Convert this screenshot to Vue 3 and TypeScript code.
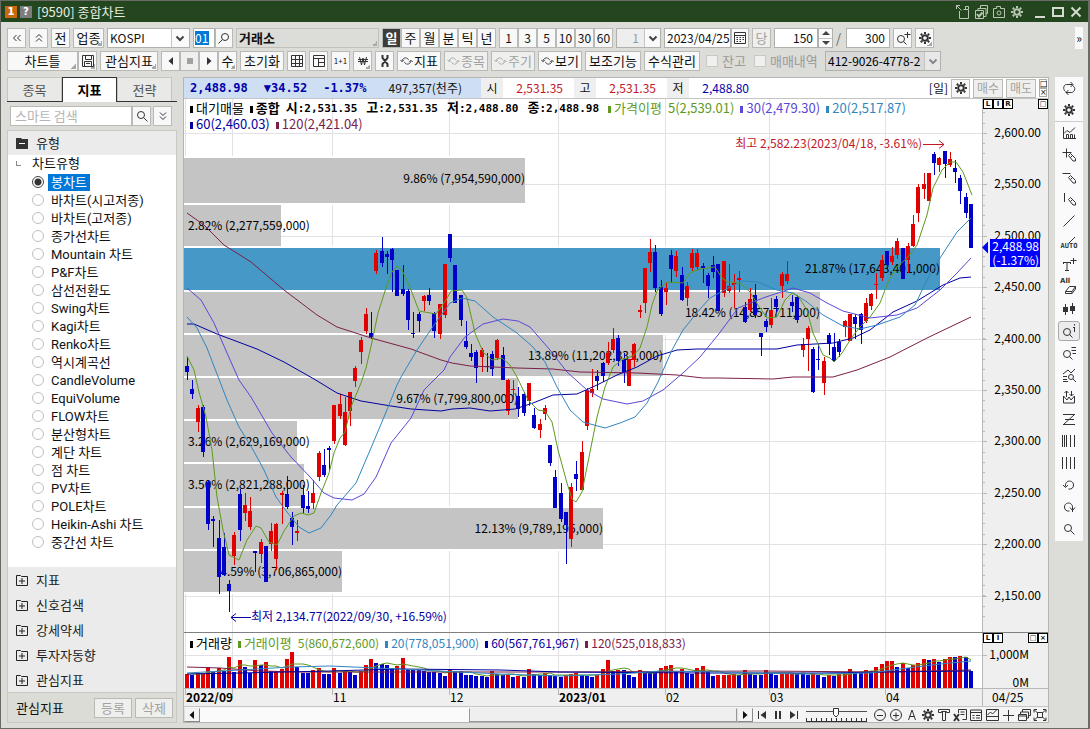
<script setup lang="ts">
import { computed, h, ref } from 'vue'

interface Stroke { d: string; w?: number; fill?: boolean }

const gear: Stroke[] = [
  { d: 'M8 5.2a2.8 2.8 0 1 0 0 5.6a2.8 2.8 0 1 0 0-5.6', w: 2 },
  { d: 'M8 2v2M8 12v2M2 8h2M12 8h2M3.8 3.8l1.4 1.4M10.8 10.8l1.4 1.4M12.2 3.8l-1.4 1.4M5.2 10.8l-1.4 1.4', w: 2 },
]
const lens = 'M7 3.5a3.5 3.5 0 1 0 0 7a3.5 3.5 0 1 0 0-7M9.5 9.5l4 4'
const smallLens = 'M6 5.5a3.5 3.5 0 1 0 0 7a3.5 3.5 0 1 0 0-7M8.5 11.5l3 3'
const pencil = 'M7.5 8.5l2-2l5 5v2.500h-2.500zM9.500 10.500l2-2'

const icons: Record<string, Stroke[]> = {
  gear,
  search: [{ d: lens }],
  searchLeft: [{ d: 'M9 3.5a3.5 3.5 0 1 0 0 7a3.5 3.5 0 1 0 0-7M6.5 9.5l-4 4' }],
  zoomPlus: [{ d: smallLens }, { d: 'M12.5 2v6M9.5 4.5h6' }],
  chevronsLeft: [{ d: 'M7.5 5l-3 3l3 3M11.5 5l-3 3l3 3' }],
  chevronsUp: [{ d: 'M5 7.5l3-3l3 3M5 11.5l3-3l3 3' }],
  chevronsDown: [{ d: 'M5 4.5l3 3l3-3M5 8.5l3 3l3-3' }],
  chevronDown: [{ d: 'M4.5 6.5l3.5 3.5l3.5-3.5', w: 2 }],
  calendar: [{ d: 'M2.5 2.5h11v11h-11zM2.5 5.5h11M4.5 7.5h1.5M7.5 7.5h1.5M10.5 7.5h1.5M4.5 9.5h1.5M7.5 9.5h1.5M10.5 9.5h1.5M4.5 11.5h1.5M7.5 11.5h1.5' }],
  save: [{ d: 'M2.5 2.5h11v11h-11zM5.5 2.5v4h6v-4M4.5 13.5v-5h7v5M6 10.5h4' }],
  left: [{ d: 'M10 4v8L5.5 8z', fill: true }],
  right: [{ d: 'M6 4v8L10.5 8z', fill: true }],
  stop: [{ d: 'M5 5h6v6H5z', fill: true }],
  grid: [{ d: 'M2.5 2.5h11v11h-11zM2.5 6.5h11M2.5 10.5h11M6.5 2.5v11M10.5 2.5v11' }],
  panes: [{ d: 'M2.5 2.5h11v11h-11zM2.5 5.5h11M7.5 5.5v8M7.5 9.5h6' }],
  won: [{ d: 'M4.5 4l2 8l1.5-7l1.5 7l2-8M3 6.5h10M3 8.5h10' }],
  dna: [{ d: 'M5.5 2v3l5 6v3M10.5 2v3l-5 6v3', w: 2 }],
  cycle: [{ d: 'M2.5 8.5c0-5 7-6 8-1.500M0.5 6.5l2 2.500l2.500-2.500M13.5 7.5c0 5-7 6-8 1.500M11 9.500l2.500-2.500l2.500 2.500' }],
  sync: [{ d: 'M4.5 11.5c-3-2-2-7 1-7h6M9.5 2l2.500 2.500L9.5 7M11.5 5.5c4 2 2 7-1 7H5M7.5 10l-2.500 2.500L7.5 15' }],
  chart: [{ d: 'M2.5 2v11.5H15M3 8.5l3-3l3 2l5-5M5.5 13v-3.500h2V13M9.5 13V9.5h2V13M13.5 9.500V13' }],
  crossPen: [{ d: 'M1.5 5.5h9M5.5 1.5v9' }, { d: pencil }],
  minusPen: [{ d: 'M1.5 4.5h8' }, { d: pencil }],
  barPen: [{ d: 'M3.5 2v9' }, { d: pencil }],
  line: [{ d: 'M2.5 13.5l11-11' }],
  tPlus: [{ d: 'M2 5.5h8M6 5.5v8M4 13.5h4M2.5 5v2M9.5 5v2M12.5 1v6M9.5 3.5h6' }],
  erase: [{ d: 'M4.5 12.5l4-5h6l-3.500 5zM4.5 12.5v2H11v-2M11 14.5l3.500-4.500V7.5' }],
  candles: [{ d: 'M4.5 3v11M11.5 2v11' }, { d: 'M2 6h5v5H2zM9 5h5v5H9z', fill: true }],
  lensI: [{ d: smallLens }, { d: 'M13.5 1v1.500M13.5 4v5M12 4.5h1.500' }],
  lensList: [{ d: smallLens }, { d: 'M10.5 2.5h4.500M10.5 5.5h4.500M11.5 8.5h3.500' }],
  chartLens: [{ d: 'M2 7l5-4l3 3l4-4M2 9.5h4M2 12.5h4M2 14.5h5M10 7.5a2.5 2.5 0 1 0 0 5a2.5 2.5 0 1 0 0-5M12 12l3 3' }],
  swing: [{ d: 'M2.5 14v-7l3.500 4l2-3l2 3l3.500-4v7zM5.5 8V2M3.5 4l2-2l2 2M10.5 2v5M8.5 5l2 2l2-2' }],
  zigzag: [{ d: 'M2 3.5h12M4 8.5h9M2 13.5h12M13.5 3.5l-11 10' }],
  bars5: [{ d: 'M1.5 2v12M3.5 2v12M5.5 2v12M9.5 2v12M13.5 2v12' }],
  bars4: [{ d: 'M1.5 2v12M5.5 2v12M9.5 2v12M13.5 2v12' }],
  undo: [{ d: 'M4.5 9.5c-1-7 8-7 8-1.500c0 3-2 4.500-5 4M2 8l2.500 2.500l2.500-2.500' }],
  redo: [{ d: 'M11.5 9.5c1-7-8-7-8-1.500c0 3 2 4.500 5 4M14 8.500l-2.500 3l-2.500-3M11.500 8v5' }],
  export: [{ d: 'M4.5 7v7.500h9v-9h-5M10.5 5V2.5h3V5M1.5 1.5l5 5M1.5 5v-3.500H5' }],
  copies: [{ d: 'M2.5 6.5h8v8h-8zM5 6V4.5h8v8h-2M7.5 4V1.5h7v8h-1.500' }, { d: 'M4 10l2 2.500l3.500-4', w: 2 }],
  camera: [{ d: 'M2.5 4.5h3v-2h4v2h4v9h-11zM8 7a2 2 0 1 0 0 4a2 2 0 1 0 0-4' }],
  minimize: [{ d: 'M3 13h10', w: 2 }],
  maximize: [{ d: 'M3 4h10v8H3z', w: 2 }],
  close: [{ d: 'M3.5 3.5l9 9M12.5 3.5l-9 9', w: 2 }],
  toStart: [{ d: 'M4.5 4v8' }, { d: 'M12 4v8L6.5 8z', fill: true }],
  pause: [{ d: 'M6 4v8M10 4v8', w: 2 }],
  toEnd: [{ d: 'M11.5 4v8' }, { d: 'M4 4v8L9.5 8z', fill: true }],
  zoomOut: [{ d: 'M8 2.5a5.5 5.5 0 1 0 0 11a5.5 5.5 0 1 0 0-11M5 8.5h6' }],
  zoomIn: [{ d: 'M8 2.5a5.5 5.5 0 1 0 0 11a5.5 5.5 0 1 0 0-11M5 8.5h6M8 5.5v6' }],
  letterA: [{ d: 'M4.5 13l3.500-10l3.500 10M5.5 9.5h5' }],
  hammer: [{ d: 'M2.5 5.5v-3h11v3h-3v-1h-5v1zM6.5 5v8.500h3V5' }],
  excel: [{ d: 'M6.5 6V2.5h8v10h-4M8.5 5h4M8.5 7.5h4' }, { d: 'M2 7l5 7M7 7l-5 7', w: 2 }],
  table: [{ d: 'M2.5 3h11v10.500h-11zM2.5 5.5h11M4.5 8.5h2M8 8.5h4M4.5 11h2M8 11h4' }],
  report: [{ d: 'M2.5 2.5h12v11h-12zM2.5 9.5h12M3.5 8l3-3l2 2l4-4' }],
  plus: [{ d: 'M8.5 3v11M3 8.5h11' }],
  windows: [{ d: 'M2.5 7.5h8v6h-8zM4.5 7V5h8v6h-2M6.5 5V2.5h8v6h-2M2.5 9h8' }],
  fit: [{ d: 'M2 5.5V2.5h3M11 2.5h3v3M14 10.5v3h-3M5 13.5H2v-3M5.5 5.5h5v5h-5zM2.5 3l3 3M13.5 3l-3 3M2.5 13l3-3M13.5 13l-3-3' }],
  folderPlus: [{ d: 'M2.5 3.5h4l1 1h6v9h-11zM5 9h6M8 6v6' }],
  folderMinus: [{ d: 'M2 3h5l1 1h6v10H2z', fill: true }],
}

const Icon = (props: { name: string }) =>
  h('svg', { viewBox: '0 0 16 16', width: 16, height: 16, fill: 'none', 'aria-hidden': 'true' },
    (icons[props.name] ?? []).map((s) =>
      h('path', {
        d: s.d,
        stroke: s.fill ? 'none' : 'currentColor',
        'stroke-width': s.w ?? 1,
        fill: s.fill ? 'currentColor' : 'none',
      })))
Icon.props = ['name']

const titleIcons = ['export', 'copies', 'camera', 'gear']
const windowIcons = ['minimize', 'maximize', 'close']
const periods = ['일', '주', '월', '분', '틱', '년']
const minutes = [1, 3, 5, 10, 30, 60]
const cycles = [
  { label: '지표', off: false },
  { label: '종목', off: true },
  { label: '주기', off: true },
  { label: '보기', off: false },
]
const chartTypes = ['봉차트', '바차트(시고저종)', '바차트(고저종)', '종가선차트', 'Mountain 차트', 'P&F차트', '삼선전환도',
  'Swing차트', 'Kagi차트', 'Renko차트', '역시계곡선', 'CandleVolume', 'EquiVolume', 'FLOW차트', '분산형차트', '계단 차트',
  '점 차트', 'PV차트', 'POLE차트', 'Heikin-Ashi 차트', '중간선 차트']
const selected = ref('봉차트')
const folders = ['지표', '신호검색', '강세약세', '투자자동향', '관심지표']
const tools = ['chart', 'crossPen', 'minusPen', 'barPen', 'line', 'auto', 'tPlus', 'erase', 'candles', 'lensI', 'lensList',
  'chartLens', 'swing', 'zigzag', 'bars5', 'bars4', 'undo', 'redo', 'search']
const footIcons = ['zoomOut', 'zoomIn', 'letterA', 'gear', 'hammer', 'excel', 'table', 'report', 'plus', 'windows', 'fit']

/* Candle: direction, body top, body bottom, wick top, wick bottom */
type Candle = [string, number, number, number, number]
const candleText = `b366 372 357 380,b389 394 380 399,r408 422 405 432,b407 452 405 457,b482 524 480 530,b519 521 516 547,b538 577 520 594,b547 575 533 576,b584 591 580 612,r535 556 532 565,
b494 530 489 541,r505 513 493 521,r511 527 497 530,b551 553 551 572,r542 554 539 563,b546 582 546 582,r531 544 523 551,r524 559 523 570,r493 495 491 524,b494 507 476 509,
b518 527 512 545,r531 533 520 541,b495 508 485 513,b506 509 491 513,r493 503 480 509,r453 477 451 481,b465 475 449 477,b448 450 446 470,r405 441 405 444,r404 416 394 419,
r412 445 397 446,r392 411 392 426,r368 381 366 387,r340 352 337 364,r314 331 308 334,b333 337 312 339,r253 271 250 274,b251 263 237 267,b254 257 251 274,b249 260 248 292,
b270 296 270 296,b289 294 265 296,b291 320 289 330,b333 334 312 338,b314 321 312 332,r296 301 295 311,b295 301 288 305,b313 331 312 338,r304 334 304 339,r264 315 264 318,
b234 258 234 262,b265 303 265 303,b295 320 295 326,b341 347 321 349,b353 357 344 361,b352 368 350 383,r350 357 348 372,b366 367 353 372,b354 369 351 376,r340 358 339 360,
b355 380 347 380,r380 411 379 415,r389 390 380 400,b396 409 387 417,b394 413 392 416,r383 401 383 406,b415 428 408 429,r424 430 419 438,r408 414 405 420,b445 463 445 466,
b477 508 470 508,b493 519 483 522,b512 525 512 564,r487 539 483 547,b474 479 461 491,r452 490 441 490,r390 426 388 430,r389 393 369 397,b376 381 370 390,b363 376 362 382,
r353 363 342 365,r339 350 328 353,b338 361 335 366,b360 372 353 383,r359 386 359 386,r344 360 343 367,r310 312 305 318,r268 303 268 313,r252 263 239 272,b252 288 245 292,
b287 314 280 316,r288 292 283 305,b255 269 250 283,r256 271 251 277,b275 300 267 301,r286 298 282 306,r253 268 249 271,r253 267 249 270,b266 268 263 283,b275 286 273 298,
b265 272 256 278,b264 311 264 311,r261 293 261 297,r286 291 264 293,r283 285 274 308,r278 280 271 292,b307 322 302 323,r299 310 288 312,b295 315 284 318,b333 337 333 356,
b321 327 319 332,r310 325 298 328,b299 307 296 312,r274 286 272 298,r274 281 261 284,b302 306 295 312,b297 320 295 323,r344 350 338 357,r328 339 326 371,b349 392 347 393,
b359 360 344 370,r361 383 357 395,b335 344 333 355,b347 361 333 362,b342 352 339 357,r321 327 320 337,r314 341 314 341,b317 324 314 339,b314 330 313 344,r303 321 298 323,
r294 306 293 310,r284 285 273 299,r260 278 255 281,b251 265 251 270,r256 262 247 265,r241 255 238 259,b248 279 248 279,r246 260 243 273,r224 246 215 247,r187 213 184 222,
r184 189 173 199,r173 201 173 201,b154 163 152 175,r158 165 157 172,b151 164 151 178,r159 165 152 167,b168 172 160 183,b178 191 175 204,b197 213 193 218,b204 248 204 248`
const candles: Candle[] = candleText.split(',').map((t) => {
  const s = t.trim()
  const n = s.slice(1).split(' ').map(Number)
  return [s[0], n[0], n[1], n[2], n[3]]
})
const xAt = (i: number) => Math.round(187 + (i * 784) / 149)

const averages = [
  { color: '#7a2048', points: '187,213 204,225 224,245 251,262 284,290 317,315 337,327 371,338 411,349 441,360 452,363 470,366 517,368 553,369 580,372 637,373 677,375 703,378 718,378 773,379 793,377 833,377 857,370 890,357 927,338 950,327 971,317' },
  { color: '#0000a0', points: '187,324 194,324 217,334 257,349 284,362 314,379 337,393 361,401 391,406 411,409 441,411 452,409 470,408 490,411 515,409 533,403 553,395 577,394 597,385 617,375 637,367 657,356 677,350 697,349 733,349 777,349 797,345 833,343 853,338 870,330 893,312 917,301 943,285 960,278 971,277' },
  { color: '#5a48d8', points: '187,288 201,300 214,323 227,353 239,380 251,397 272,433 291,457 311,478 324,493 334,498 352,500 364,494 376,477 391,443 411,418 424,390 444,370 450,357 465,337 483,324 503,319 518,321 530,327 550,350 567,372 587,390 603,399 627,404 643,401 663,390 683,373 700,357 718,335 727,323 738,308 763,298 793,288 810,293 827,303 843,311 870,318 897,315 917,308 940,290 957,273 971,258' },
  { color: '#2f86c0', points: '187,317 197,328 207,348 217,374 227,400 239,427 252,448 264,470 276,497 287,512 299,527 309,533 321,528 331,515 337,505 356,483 371,448 384,417 397,385 401,377 417,350 434,325 450,303 462,298 475,301 493,317 517,333 533,347 545,362 557,387 570,410 583,422 605,428 620,423 635,417 647,403 658,382 672,350 683,330 700,309 710,298 730,287 743,281 758,282 777,290 793,293 807,302 823,315 843,326 860,329 877,325 900,317 915,305 927,280 940,258 957,232 971,218' },
  { color: '#5e9a1e', points: '187,356 194,370 199,392 206,417 212,450 217,497 223,530 229,555 239,560 247,540 256,526 261,528 269,542 277,545 284,531 294,516 301,513 308,515 314,513 321,493 329,473 334,453 340,438 345,432 351,407 361,383 366,368 372,342 378,313 386,288 392,272 397,266 402,270 411,290 419,311 436,314 446,300 451,291 462,290 467,298 475,333 483,352 492,360 502,358 510,365 517,377 528,400 538,410 545,411 552,422 558,450 567,483 572,499 576,502 582,492 587,467 597,417 605,387 613,367 623,359 633,356 640,348 647,327 652,305 657,291 667,282 683,283 690,273 700,269 715,267 722,278 728,282 740,283 750,292 758,305 767,318 777,317 785,300 792,293 798,296 807,310 813,333 823,355 830,358 834,362 842,353 852,337 860,327 870,317 880,303 888,282 897,267 907,258 917,245 927,215 933,188 942,170 950,162 956,162 963,172 972,195' },
]

const profile = [
  { y: 158, h: 45, end: 525, text: '9.86% (7,954,590,000)' },
  { y: 205, h: 41, end: 281, text: '2.82% (2,277,559,000)' },
  { y: 248, h: 42, end: 940, text: '21.87% (17,643,401,000)' },
  { y: 292, h: 41, end: 820, text: '18.42% (14,857,711,000)' },
  { y: 335, h: 41, end: 663, text: '13.89% (11,202,331,000)' },
  { y: 378, h: 41, end: 518, text: '9.67% (7,799,800,000)' },
  { y: 421, h: 41, end: 297, text: '3.26% (2,629,169,000)' },
  { y: 464, h: 42, end: 304, text: '3.50% (2,821,288,000)' },
  { y: 508, h: 41, end: 603, text: '12.13% (9,789,195,000)' },
  { y: 551, h: 41, end: 342, text: '4.59% (3,706,865,000)' },
]

const priceLabels = ['2,600.00', '2,550.00', '2,500.00', '2,450.00', '2,400.00', '2,350.00', '2,300.00', '2,250.00', '2,200.00', '2,150.00']
const priceY = (i: number) => Math.round(133 + i * 51.4) + 0.5
const minorTicks = Array.from({ length: 51 }, (_, i) => Math.round(102 + i * 10.28) + 0.5)
const months = [
  { x: 185, label: '2022/09', bold: true },
  { x: 232, label: '', bold: false },
  { x: 332, label: '11', bold: false },
  { x: 449, label: '12', bold: false },
  { x: 558, label: '2023/01', bold: true },
  { x: 665, label: '02', bold: false },
  { x: 769, label: '03', bold: false },
  { x: 885, label: '04', bold: false },
]

/* Height of each volume bar, thirds of a unit */
const volumes = [42, 40, 44, 46, 62, 48, 61, 52, 93, 49, 84, 64, 46, 84, 69, 77, 52, 52, 56, 87, 108, 62, 46, 46, 54, 61, 43, 43, 61, 46,
  50, 49, 40, 52, 69, 87, 75, 72, 69, 61, 66, 90, 57, 54, 54, 52, 48, 48, 46, 37, 54, 52, 50, 40, 38, 36, 35, 33, 50, 42,
  38, 40, 34, 36, 34, 56, 42, 38, 44, 40, 36, 34, 38, 42, 44, 40, 36, 34, 40, 56, 84, 50, 54, 54, 38, 33, 54, 47, 46, 46,
  60, 66, 69, 52, 57, 45, 42, 60, 66, 52, 36, 38, 40, 40, 42, 38, 54, 42, 40, 38, 54, 46, 40, 42, 44, 46, 44, 42, 38, 44,
  40, 33, 38, 36, 42, 44, 57, 46, 44, 54, 50, 62, 71, 81, 81, 64, 74, 60, 70, 75, 87, 84, 87, 79, 87, 93, 93, 96, 92, 51]
const volumeBars = volumes.map((v, i) => ({
  x: xAt(i) - 2,
  h: Math.round(v / 3),
  color: v > (volumes[i - 1] ?? 0) || (v === volumes[i - 1] && candles[i][0] === 'r') ? '#e00000' : '#0000c8',
}))
const volumeFast = computed(() => volumes.map((_, i) => {
  const part = volumes.slice(Math.max(0, i - 4), i + 1)
  const mean = part.reduce((a, b) => a + b, 0) / part.length
  return `${xAt(i)},${Math.round(688 - mean / 3)}`
}).join(' '))
const volumeAverages = [
  { color: '#7a2048', points: '187,667 220,668 260,671 300,672 420,672 560,672 760,671 880,672 971,670' },
  { color: '#0000a0', points: '187,674 240,673 330,671 400,669 500,670 560,672 700,673 820,673 890,672 971,671' },
  { color: '#2f86c0', points: '187,673 240,670 290,667 330,666 400,669 440,671 500,674 560,676 620,674 660,671 720,672 800,674 870,673 900,669 940,664 971,661' },
]

const legendPrice = [
  { name: '가격이평', text: '5(2,539.01)', color: '#5e9a1e' },
  { name: '', text: '30(2,479.30)', color: '#5a48d8' },
  { name: '', text: '20(2,517.87)', color: '#2f86c0' },
]
const legendLow = [
  { name: '', text: '60(2,460.03)', color: '#0000a0' },
  { name: '', text: '120(2,421.04)', color: '#7a2048' },
]
const legendVolume = [
  { name: '거래량', text: '', color: '#000000' },
  { name: '거래이평', text: '5(860,672,600)', color: '#5e9a1e' },
  { name: '', text: '20(778,051,900)', color: '#2f86c0' },
  { name: '', text: '60(567,761,967)', color: '#0000a0' },
  { name: '', text: '120(525,018,833)', color: '#7a2048' },
]
const ohlc = [
  { name: '시', value: '2,531.35' },
  { name: '고', value: '2,531.35' },
  { name: '저', value: '2,488.80' },
  { name: '종', value: '2,488.98' },
]
const sliderTicks = Array.from({ length: 13 }, (_, i) => i)
</script>

<template>
  <div class="window">
    <header class="titlebar">
      <span class="badge one">1</span>
      <span class="badge help">?</span>
      <h1>[9590] 종합차트</h1>
      <div class="title-actions">
        <button v-for="n in titleIcons" :key="n" type="button" :aria-label="n"><Icon :name="n" /></button>
      </div>
      <div class="title-actions sys">
        <button v-for="n in windowIcons" :key="n" type="button" :aria-label="n"><Icon :name="n" /></button>
      </div>
    </header>

    <div class="toolbar">
      <button class="btn sq" type="button" aria-label="처음"><Icon name="chevronsLeft" /></button>
      <button class="btn sq" type="button" aria-label="위로"><Icon name="chevronsUp" /></button>
      <button class="btn sq" type="button">전</button>
      <button class="btn kind corner" type="button">업종</button>
      <div class="drop index">
        <select aria-label="지수"><option>KOSPI</option></select>
        <span class="arrow"><Icon name="chevronDown" /></span>
      </div>
      <div class="join">
        <div class="field code"><input type="text" value="01" aria-label="코드"></div>
        <button class="btn find" type="button" aria-label="찾기"><Icon name="searchLeft" /></button>
      </div>
      <input class="market corner" type="text" value="거래소" readonly aria-label="시장">
      <div class="join">
        <button v-for="p in periods" :key="p" class="btn sq" :class="{ on: p === '일' }" type="button">{{ p }}</button>
      </div>
      <div class="join">
        <button v-for="m in minutes" :key="m" class="btn sq num" type="button">{{ m }}</button>
      </div>
      <div class="drop tick">
        <select aria-label="틱 단위"><option>1</option></select>
        <span class="arrow"><Icon name="chevronDown" /></span>
      </div>
      <div class="join">
        <input class="date" type="text" value="2023/04/25" aria-label="날짜">
        <button class="btn find" type="button" aria-label="달력"><Icon name="calendar" /></button>
      </div>
      <button class="btn sq" type="button" disabled>당</button>
      <div class="join">
        <input class="count" type="text" value="150" aria-label="표시 개수">
        <span class="spin">
          <button type="button" aria-label="증가"><svg width="8" height="4" viewBox="0 0 8 4"><path d="M0 4L4 0l4 4z" fill="#444" /></svg></button>
          <button type="button" aria-label="감소"><svg width="8" height="4" viewBox="0 0 8 4"><path d="M0 0l4 4l4-4z" fill="#444" /></svg></button>
        </span>
      </div>
      <span class="slash">/</span>
      <input class="count" type="text" value="300" aria-label="전체 개수">
      <button class="btn sq" type="button" aria-label="확대"><Icon name="zoomPlus" /></button>
      <button class="btn sq corner" type="button" aria-label="설정"><Icon name="gear" /></button>
      <button class="more" type="button" aria-label="더보기">»</button>
    </div>

    <div class="toolbar second">
      <div class="join">
        <button class="btn frame corner" type="button">차트틀</button>
        <button class="btn sq corner" type="button" aria-label="저장"><Icon name="save" /></button>
      </div>
      <button class="btn favor corner" type="button">관심지표</button>
      <div class="join">
        <button class="btn sq" type="button" aria-label="이전"><Icon name="left" /></button>
        <button class="btn sq" type="button" aria-label="정지" disabled><Icon name="stop" /></button>
        <button class="btn sq" type="button" aria-label="다음"><Icon name="right" /></button>
        <button class="btn sq corner" type="button">수</button>
      </div>
      <button class="btn mid" type="button">초기화</button>
      <button class="btn sq" type="button" aria-label="격자"><Icon name="grid" /></button>
      <button class="btn sq" type="button" aria-label="화면 분할"><Icon name="panes" /></button>
      <button class="btn sq tiny" type="button">1+1</button>
      <button class="btn sq corner" type="button" aria-label="원화"><Icon name="won" /></button>
      <button class="btn sq" type="button" aria-label="패턴"><Icon name="dna" /></button>
      <button v-for="c in cycles" :key="c.label" class="btn mid cyc" type="button" :disabled="c.off">
        <Icon name="cycle" />{{ c.label }}
      </button>
      <button class="btn wide" type="button">보조기능</button>
      <button class="btn wide" type="button">수식관리</button>
      <div class="checks">
        <label><input type="checkbox" disabled>잔고</label>
        <label><input type="checkbox" disabled>매매내역</label>
      </div>
      <div class="drop account">
        <select aria-label="계좌"><option>412-9026-4778-2</option></select>
        <span class="arrow"><Icon name="chevronDown" /></span>
      </div>
    </div>

    <div class="body">
      <aside class="side">
        <nav class="tabs">
          <button type="button">종목</button>
          <button type="button" class="active">지표</button>
          <button type="button">전략</button>
        </nav>
        <div class="search">
          <input type="text" placeholder="스마트 검색" aria-label="스마트 검색">
          <button class="btn" type="button" aria-label="검색"><Icon name="search" /></button>
          <button class="btn fold" type="button" aria-label="펼치기"><Icon name="chevronsDown" /></button>
        </div>
        <div class="tree">
          <button class="folder first" type="button"><span class="minus"><Icon name="folderMinus" /></span>유형</button>
          <fieldset>
            <legend>차트유형</legend>
            <label v-for="t in chartTypes" :key="t">
              <input v-model="selected" type="radio" name="type" :value="t"><span>{{ t }}</span>
            </label>
          </fieldset>
          <button v-for="f in folders" :key="f" class="folder" type="button"><Icon name="folderPlus" />{{ f }}</button>
          <footer>
            <span>관심지표</span>
            <button class="btn" type="button" disabled>등록</button>
            <button class="btn" type="button" disabled>삭제</button>
          </footer>
        </div>
      </aside>

      <main class="chart">
        <div class="quote">
          <div class="last"><b>2,488.98</b><b>▼34.52</b><b>-1.37%</b><span>497,357(천주)</span></div>
          <i>시</i><em class="up">2,531.35</em>
          <i>고</i><em class="up">2,531.35</em>
          <i>저</i><em>2,488.80</em>
          <span class="unit">[일]</span>
          <button class="btn sq" type="button" aria-label="설정"><Icon name="gear" /></button>
          <button class="btn trade" type="button" disabled>매수</button>
          <button class="btn trade" type="button" disabled>매도</button>
          <span class="pair"><button type="button" aria-label="확대">□</button><button type="button" aria-label="닫기">×</button></span>
        </div>

        <div class="stage">
          <svg class="plot" viewBox="184 99 864 607" role="img" aria-label="KOSPI 일봉 차트">
            <rect x="184" y="99" width="864" height="607" fill="#ffffff" />
            <rect x="982" y="99" width="66" height="607" fill="#efefef" />
            <rect x="184" y="689" width="864" height="17" fill="#efefef" />
            <g stroke="#e2e2e6" shape-rendering="crispEdges">
              <line v-for="m in months" :key="m.x" :x1="m.x + 0.5" :x2="m.x + 0.5" y1="99" y2="688" />
              <line v-for="(p, i) in priceLabels" :key="p" x1="184" x2="982" :y1="priceY(i)" :y2="priceY(i)" />
              <line x1="184" x2="982" y1="655.5" y2="655.5" />
            </g>
            <g shape-rendering="crispEdges">
              <template v-for="b in profile" :key="b.y">
                <rect x="184" :y="b.y - 2" :width="b.end - 184" :height="b.h + 4" fill="#ffffff" />
                <rect x="184" :y="b.y" :width="b.end - 184" :height="b.h" :fill="b.y === 248 ? '#4698c6' : '#c4c4c4'" />
              </template>
            </g>
            <g class="label">
              <text
                v-for="b in profile" :key="b.y" :x="b.end < 310 ? 188 : b.end" :y="b.y + 25"
                :text-anchor="b.end < 310 ? 'start' : 'end'"
              >{{ b.text }}</text>
            </g>
            <g shape-rendering="crispEdges">
              <g v-for="(c, i) in candles" :key="i" :fill="c[0] === 'r' ? '#e00000' : '#0000c8'">
                <rect :x="xAt(i)" :y="c[3]" width="1" :height="c[4] - c[3]" />
                <rect :x="xAt(i) - 2" :y="c[1]" width="4" :height="c[2] - c[1]" />
              </g>
            </g>
            <polyline v-for="a in averages" :key="a.color" :points="a.points" fill="none" :stroke="a.color" />
            <g class="label">
              <text x="922" y="148" text-anchor="end" fill="#c01828">최고 2,582.23(2023/04/18, -3.61%)</text>
              <path d="M923 144.5h21M939 140.5l5 4l-5 4" fill="none" stroke="#c01828" />
              <text x="251" y="621" fill="#0000a0">최저 2,134.77(2022/09/30, +16.59%)</text>
              <path d="M251 617.5h-20M236 613.5l-5 4l5 4" fill="none" stroke="#0000a0" />
            </g>

            <g shape-rendering="crispEdges">
              <rect v-for="(v, i) in volumeBars" :key="i" :x="v.x" :y="688 - v.h" width="4" :height="v.h" :fill="v.color" />
            </g>
            <polyline :points="volumeFast" fill="none" stroke="#5e9a1e" />
            <polyline v-for="a in volumeAverages" :key="a.color" :points="a.points" fill="none" :stroke="a.color" />

            <g stroke="#b8b8b8" shape-rendering="crispEdges">
              <line x1="982.5" x2="982.5" y1="99" y2="706" />
              <line v-for="t in minorTicks" :key="t" x1="982" x2="985" :y1="t" :y2="t" />
              <line v-for="(p, i) in priceLabels" :key="p" x1="982" x2="987" :y1="priceY(i)" :y2="priceY(i)" />
              <line x1="982" x2="987" y1="655.5" y2="655.5" />
              <line x1="184" x2="1048" y1="688.5" y2="688.5" />
              <line v-for="m in months" :key="m.x" :x1="m.x + 0.5" :x2="m.x + 0.5" y1="689" y2="695" />
              <line x1="184" x2="1048" y1="632.5" y2="632.5" stroke="#808080" />
            </g>
            <g class="label">
              <text v-for="(p, i) in priceLabels" :key="p" x="1041" :y="priceY(i) + 3" text-anchor="end">{{ p }}</text>
              <text x="1029" y="659" text-anchor="end">1,000M</text>
              <text x="1029" y="687" text-anchor="end">0M</text>
              <text x="992" y="702">04/25</text>
              <text v-for="m in months" :key="m.x" :x="m.x + 1" y="702" :class="{ bold: m.bold }">{{ m.label }}</text>
            </g>
            <rect x="990" y="239" width="50" height="28" fill="#0000ff" />
            <path d="M982 247.5l6-6v12z" fill="#0000ff" />
            <g class="label" fill="#ffffff">
              <text x="1039" y="251" text-anchor="end">2,488.98</text>
              <text x="1039" y="265" text-anchor="end">(-1.37%)</text>
            </g>
          </svg>

          <div class="legend top">
            <p>
              <span class="mark">대기매물</span>
              <strong class="mark">종합</strong>
              <strong v-for="o in ohlc" :key="o.name" class="ohlc">{{ o.name }}<b>:{{ o.value }}</b></strong>
              <span v-for="l in legendPrice" :key="l.text" class="mark" :style="{ color: l.color }"><span v-if="l.name" class="name">{{ l.name }}</span>{{ l.text }}</span>
            </p>
            <p>
              <span v-for="l in legendLow" :key="l.text" class="mark" :style="{ color: l.color }">{{ l.text }}</span>
            </p>
          </div>
          <div class="legend bottom">
            <p>
              <span v-for="l in legendVolume" :key="l.text" class="mark" :style="{ color: l.color }"><span v-if="l.name" :class="{ name: l.text }">{{ l.name }}</span><small>{{ l.text }}</small></span>
            </p>
          </div>
          <div class="mini top"><button type="button">L</button><button type="button">I</button><button type="button">R</button><button class="end" type="button">□</button></div>
          <div class="mini bottom"><button type="button">L</button><button type="button">I</button><button class="end" type="button">□</button><button type="button">×</button></div>
        </div>

        <div class="scroll">
          <button class="knob" type="button" aria-label="왼쪽"><Icon name="left" /></button>
          <div class="track"><div class="thumb"></div></div>
          <button class="knob" type="button" aria-label="오른쪽"><Icon name="right" /></button>
          <div class="foot play">
            <button type="button" aria-label="처음"><Icon name="toStart" /></button>
            <button type="button" aria-label="일시정지"><Icon name="pause" /></button>
            <button type="button" aria-label="끝"><Icon name="toEnd" /></button>
          </div>
          <svg class="speed" viewBox="0 0 62 15" width="62" height="15" aria-hidden="true">
            <path d="M0 4.5h61" stroke="#505050" />
            <path v-for="t in sliderTicks" :key="t" :d="`M${t * 5 + 0.5} 11v3`" stroke="#303030" />
            <path d="M0 14.5h61" stroke="#303030" />
            <path d="M27.5 1.5h5v6l-2.5 2.5l-2.5-2.5z" fill="#ffffff" stroke="#303030" />
          </svg>
          <div class="foot">
            <button v-for="n in footIcons" :key="n" type="button" :aria-label="n"><Icon :name="n" /></button>
          </div>
        </div>
      </main>

      <nav class="strip">
        <button type="button" aria-label="sync"><Icon name="sync" /></button>
        <button type="button" aria-label="gear"><Icon name="gear" /></button>
        <hr>
        <button v-for="t in tools" :key="t" type="button" :aria-label="t" :class="{ picked: t === 'lensI' }">
          <span v-if="t === 'auto'" class="auto"><svg width="12" height="6" viewBox="0 0 12 6"><path d="M4 6l6-6" stroke="currentColor" /></svg>AUTO</span>
          <span v-else-if="t === 'erase'" class="erase"><small>All</small><Icon name="erase" /></span>
          <Icon v-else :name="t" />
        </button>
      </nav>
    </div>
  </div>
</template>

<style>
html,
body {
  background: #dcdcd8;
}
</style>

<style scoped>
* {
  box-sizing: border-box;
}

.window {
  min-height: 100vh;
  border: solid #6a6a66;
  border-width: 1px 2px 2px 1px;
  background: #dcdcd8;
  color: #111;
  font: 13px/16px "Noto Sans CJK KR", "Noto Sans", sans-serif;
}

button,
input,
select {
  margin: 0;
  padding: 0;
  border: 0;
  border-radius: 0;
  background: none;
  color: inherit;
  font: inherit;
}

svg {
  display: block;
  flex: none;
}

.titlebar {
  display: flex;
  align-items: center;
  height: 21px;
  padding: 0 4px;
  gap: 3px;
  background: #24461f;
  color: #e6ebe2;
}

.badge {
  width: 12px;
  height: 12px;
  font: bold 10px/12px "DejaVu Sans", sans-serif;
  text-align: center;
  color: #fff;
}

.badge.one {
  background: #c8690c;
}

.badge.help {
  background: #7d7d7d;
}

h1 {
  flex: 1;
  margin: 0 2px;
  font: 13px/20px "Noto Sans CJK KR", sans-serif;
}

.title-actions {
  display: flex;
  gap: 2px;
  color: #b9c6b4;
}

.title-actions.sys {
  margin-left: 4px;
  color: #d4dccf;
}

.toolbar {
  display: flex;
  align-items: center;
  gap: 3px;
  height: 20px;
  margin: 6px 5px 0 6px;
}

.toolbar.second {
  margin-top: 3px;
}

.toolbar > * {
  flex: none;
}

.btn {
  position: relative;
  display: flex;
  align-items: center;
  justify-content: center;
  height: 20px;
  border: 1px solid #b9b9b5;
  background-color: #f8f8f8;
  white-space: nowrap;
}

.btn svg {
  color: #333;
}

.btn:disabled,
.btn:disabled svg {
  color: #a2a2a2;
}

.btn:disabled {
  background-color: #efefed;
}

.btn.on {
  background-color: #3c3c3c;
  color: #fff;
  font-weight: bold;
}

.sq {
  width: 19px;
}

.num {
  font-size: 12px;
}

.tiny {
  font-size: 8px;
}

.corner {
  background-image: linear-gradient(135deg, transparent 50%, #a8a8a8 50%);
  background-position: right 1px bottom 1px;
  background-repeat: no-repeat;
  background-size: 5px 5px;
}

.kind {
  width: 31px;
}

.join {
  display: flex;
}

.drop {
  position: relative;
  display: flex;
  height: 20px;
  border: 1px solid #b0b0ac;
  background: #fff;
}

.drop select {
  width: 100%;
  padding-left: 2px;
  appearance: none;
  line-height: 16px;
  font-size: 12px;
}

.arrow {
  position: absolute;
  right: 0;
  top: 0;
  bottom: 0;
  display: flex;
  align-items: center;
  width: 18px;
  border-left: 1px solid #c4c4c0;
  background: #fafafa;
  pointer-events: none;
  color: #444;
}

.index {
  width: 83px;
}

.tick {
  width: 45px;
}

.tick select {
  padding-right: 21px;
  text-align: right;
  text-align-last: right;
  color: #999;
  background: #eee;
}

.tick .arrow,
.account .arrow {
  width: 16px;
}

.field {
  display: flex;
  align-items: center;
  height: 20px;
  border: 1px solid #b0b0ac;
  background: #fff;
}

.code {
  width: 22px;
}

.code input {
  width: 14px;
  margin-left: 1px;
  height: 14px;
  background: #0078d7;
  color: #fff;
  font-size: 12px;
}

.find {
  width: 18px;
}

.market {
  width: 143px;
  height: 20px;
  padding: 0 2px 2px;
  border: 1px solid #c0c0bc;
  background-color: #dcdcd8;
  font-weight: bold;
}

.date,
.count {
  height: 20px;
  padding-bottom: 2px;
  border: 1px solid #b0b0ac;
  background: #fff;
  font-size: 12px;
}

.date {
  width: 67px;
  padding-left: 2px;
}

.count {
  width: 44px;
  padding-right: 4px;
  text-align: right;
}

.spin {
  display: flex;
  flex-direction: column;
  width: 15px;
  border: 1px solid #b0b0ac;
  background: #fafafa;
}

.spin button {
  display: flex;
  flex: 1;
  align-items: center;
  justify-content: center;
}

.spin button + button {
  border-top: 1px solid #c4c4c0;
}

.slash {
  width: 7px;
  color: #666;
}

.more {
  width: 8px;
  height: 22px;
  margin-left: auto;
  background: #fafafa;
  font-size: 12px;
}

.frame {
  width: 71px;
}

.favor {
  width: 58px;
}

.mid {
  width: 44px;
}

.wide {
  width: 56px;
}

.cyc svg {
  width: 13px;
  margin-right: 1px;
}

.checks {
  display: flex;
  gap: 8px;
  width: 119px;
  padding-left: 3px;
  color: #9a9a98;
}

.checks label {
  display: flex;
  align-items: center;
  gap: 4px;
  white-space: nowrap;
}

.checks input {
  width: 12px;
  height: 12px;
  appearance: none;
  border: 1px solid #c8c8c4;
  background: #f0f0ee;
}

.account {
  width: 116px;
  background: #d9d9d9;
  color: #000;
}

.account .arrow {
  background: #e8e8e8;
  color: #888;
}

.body {
  display: flex;
  align-items: flex-start;
  gap: 6px;
  margin: 6px 5px 5px 6px;
}

.side {
  flex: none;
  align-self: stretch;
  display: flex;
  flex-direction: column;
  width: 170px;
}

.tabs {
  display: flex;
  height: 25px;
  border-bottom: 1px solid #333;
}

.tabs button {
  width: 55px;
  border: 1px solid #c4c4c0;
  border-bottom: 0;
  background: #e9e9e7;
  color: #555;
}

.tabs .active {
  height: 25px;
  border-color: #333;
  background: #fff;
  color: #000;
  font-weight: bold;
}

.search {
  display: flex;
  margin: 4px 3px;
}

.search input {
  width: 122px;
  height: 20px;
  padding: 0 0 2px 4px;
  border: 1px solid #b9b9b5;
  background: #fff;
}

.search input::placeholder {
  color: #b4b4b4;
}

.search .btn {
  width: 19px;
}

.search .fold {
  margin-left: 2px;
}

.tree {
  flex: 1;
  display: flex;
  flex-direction: column;
  border: 1px solid #c8c8c4;
  background: #ebebeb;
}

.folder {
  display: flex;
  align-items: center;
  flex: none;
  gap: 6px;
  width: 100%;
  height: 25px;
  padding-left: 6px;
  color: #222;
}

.folder.first {
  height: 24px;
}

.minus {
  position: relative;
  color: #333;
}

.minus::after {
  content: "";
  position: absolute;
  left: 5px;
  top: 8px;
  width: 6px;
  height: 1px;
  background: #fff;
}

fieldset {
  flex: 1;
  min-width: 0;
  margin: 0;
  padding: 0;
  border: 0;
  background: #fff;
  font-family: Roboto, "Noto Sans CJK KR", sans-serif;
}

legend {
  float: left;
  width: 100%;
  height: 18px;
  padding: 0 0 0 24px;
  line-height: 17px;
  background: linear-gradient(#888, #888) 8px 10px / 5px 1px no-repeat, linear-gradient(#888, #888) 8px 6px / 1px 4px no-repeat;
}

fieldset label {
  display: flex;
  clear: both;
  align-items: center;
  gap: 4px;
  height: 18px;
  padding-left: 24px;
}

fieldset label span {
  padding: 0 3px;
  line-height: 17px;
}

fieldset input {
  width: 12px;
  height: 12px;
  appearance: none;
  border: 1px solid #c0c0c0;
  border-radius: 50%;
  background: #fff;
}

fieldset input:checked {
  border-color: #444;
  background: radial-gradient(circle, #333 3px, #fff 4px);
}

fieldset input:checked + span {
  background: #0078d7;
  color: #fff;
}

.tree footer {
  display: flex;
  align-items: center;
  gap: 3px;
  height: 30px;
  padding: 0 3px 0 8px;
  border-top: 1px solid #c8c8c4;
  background: #dcdcd6;
}

.tree footer span {
  flex: 1;
}

.tree footer .btn {
  width: 38px;
}

.chart {
  flex: 1;
  min-width: 0;
  border: 1px solid #b4b4b0;
  background: #fff;
}

.quote {
  display: flex;
  align-items: center;
  height: 21px;
  border-bottom: 1px solid #c4c4c4;
  font-size: 12px;
  white-space: nowrap;
}

.last {
  display: flex;
  align-items: center;
  gap: 16px;
  width: 297px;
  height: 20px;
  padding-left: 6px;
  background: #cfdff3;
}

.last b {
  color: #0000a8;
  font: bold 12px/20px "DejaVu Sans Mono", monospace;
}

.last span {
  margin-left: 6px;
}

.quote i {
  width: 22px;
  height: 20px;
  background: #efefef;
  font-style: normal;
  line-height: 20px;
  text-align: center;
}

.quote em {
  width: 71px;
  padding-right: 11px;
  color: #0000a8;
  font-style: normal;
  text-align: right;
}

.quote em.up {
  color: #c01828;
}

.quote em:last-of-type {
  width: 60px;
  padding: 0;
}

.unit {
  margin-left: auto;
  padding-right: 3px;
}

.quote .btn {
  height: 19px;
  margin-right: 3px;
}

.trade {
  width: 30px;
}

.pair {
  display: flex;
  flex-direction: column;
  width: 8px;
  margin-right: 1px;
}

.pair button {
  height: 9px;
  border: 1px solid #aaa;
  font: 8px/7px "DejaVu Sans", sans-serif;
}

.stage {
  position: relative;
}

.plot {
  width: 100%;
  height: auto;
}

.label {
  font: 12px "Noto Sans CJK KR", sans-serif;
}

.label .bold {
  font-weight: bold;
}

.legend {
  position: absolute;
  left: 6px;
  color: #000;
}

.legend.top {
  top: 1px;
}

.legend.bottom {
  bottom: 55px;
}

.legend p {
  display: flex;
  align-items: center;
  gap: 6px;
  height: 16px;
  margin: 0;
  white-space: nowrap;
}

.legend small {
  font-size: 12px;
}

.ohlc {
  margin-right: 3px;
}

.ohlc b {
  font: bold 11px/16px "DejaVu Sans Mono", monospace;
}

.name {
  margin-right: 6px;
}

.mark::before {
  content: "";
  display: inline-block;
  width: 3px;
  height: 7px;
  margin-right: 3px;
  background: currentColor;
}

.mini {
  position: absolute;
  right: 0;
  display: flex;
  width: 65px;
}

.mini.top {
  top: 0;
}

.mini.bottom {
  bottom: 63px;
}

.mini button {
  width: 10px;
  height: 10px;
  border: 1px solid #000;
  background: #fff;
  font: bold 7px/8px "DejaVu Sans", sans-serif;
}

.mini .end {
  margin-left: auto;
}

.scroll {
  display: flex;
  align-items: center;
  height: 16px;
  border-top: 1px solid #c4c4c4;
  background: #f4f4f4;
}

.knob {
  display: flex;
  align-items: center;
  justify-content: center;
  width: 16px;
  height: 14px;
  border: 1px solid #888;
  border-top-color: #eee;
  border-left-color: #ddd;
}

.track {
  display: flex;
  justify-content: flex-end;
  flex: 1;
  height: 14px;
  background: #fafafa;
}

.thumb {
  width: 50%;
  border: 1px solid #999;
  border-top-color: #eee;
  background: #efefef;
}

.foot {
  display: flex;
  color: #333;
}

.foot.play {
  margin: 0 4px 0 1px;
}

.speed {
  margin-right: 4px;
}

.strip {
  flex: none;
  width: 28px;
  padding-bottom: 1px;
  background: #fafafa;
  color: #333;
}

.strip hr {
  height: 1px;
  margin: 0;
  border: 0;
  background: #ccc;
}

.strip button {
  display: flex;
  align-items: center;
  justify-content: center;
  width: 22px;
  height: 22px;
  margin: 0 3px;
  border: 1px solid transparent;
}

.strip .picked {
  height: 20px;
  margin: 1px 3px;
  border-color: #a8a8a8;
  border-radius: 3px;
  background: #ececec;
}

.auto {
  font: bold 7px/7px "DejaVu Sans Mono", monospace;
}

.auto svg {
  margin-left: 4px;
}

.erase {
  position: relative;
}

.erase small {
  position: absolute;
  left: -1px;
  top: -2px;
  font: bold 7px/8px "DejaVu Sans", sans-serif;
}
</style>
